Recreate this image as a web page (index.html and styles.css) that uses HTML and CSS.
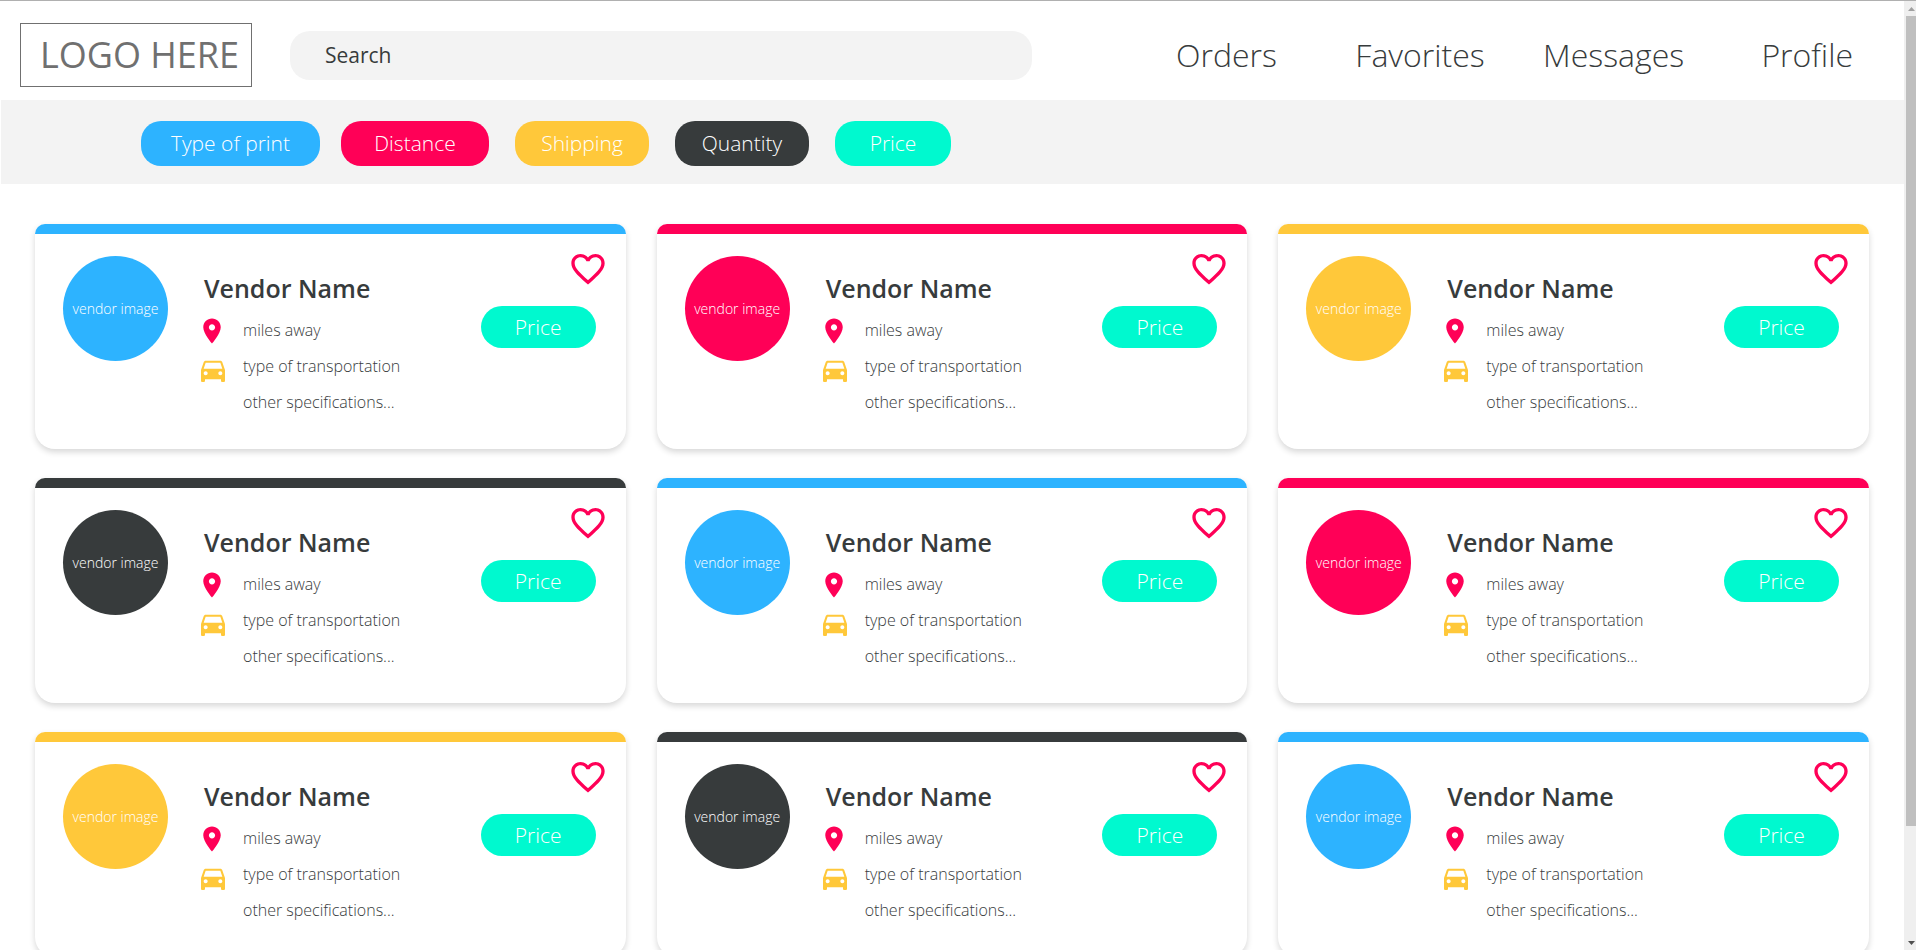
FILE: index.html
```html
<!DOCTYPE html>
<html lang="en">
<head>
<meta charset="utf-8">
<title>Vendors</title>
<link rel="stylesheet" href="styles.css">
</head>
<body>
<svg class="sprite" aria-hidden="true">
  <symbol id="heart" viewBox="0 0 24 24"><path d="M16.5 3c-1.74 0-3.41.81-4.5 2.09C10.91 3.81 9.24 3 7.5 3 4.42 3 2 5.42 2 8.5c0 3.78 3.4 6.86 8.55 11.54L12 21.35l1.45-1.32C18.6 15.36 22 12.28 22 8.5 22 5.42 19.58 3 16.5 3zm-4.4 15.55l-.1.1-.1-.1C7.14 14.24 4 11.39 4 8.5 4 6.5 5.5 5 7.5 5c1.54 0 3.04.99 3.57 2.36h1.87C13.46 5.99 14.96 5 16.5 5c2 0 3.5 1.5 3.5 3.5 0 2.89-3.14 5.74-7.9 10.05z"/></symbol>
  <symbol id="pin" viewBox="0 0 24 24"><path d="M12 2C8.13 2 5 5.13 5 9c0 5.25 7 13 7 13s7-7.75 7-13c0-3.87-3.13-7-7-7zm0 9.5c-1.38 0-2.5-1.12-2.5-2.5s1.12-2.5 2.5-2.5 2.5 1.12 2.5 2.5-1.12 2.5-2.5 2.5z"/></symbol>
  <symbol id="car" viewBox="0 0 24 24"><path d="M18.92 6.01C18.72 5.42 18.16 5 17.5 5h-11c-.66 0-1.21.42-1.42 1.01L3 12v8c0 .55.45 1 1 1h1c.55 0 1-.45 1-1v-1h12v1c0 .55.45 1 1 1h1c.55 0 1-.45 1-1v-8l-2.08-5.99zM6.5 16c-.83 0-1.5-.67-1.5-1.5S5.67 13 6.5 13s1.5.67 1.5 1.5S7.33 16 6.5 16zm11 0c-.83 0-1.5-.67-1.5-1.5s.67-1.5 1.5-1.5 1.5.67 1.5 1.5-.67 1.5-1.5 1.5zM5 11l1.5-4.5h11L19 11H5z"/></symbol>
</svg>
<div class="window">
  <div class="page">
    <header class="header">
      <a class="logo" href="#">LOGO HERE</a>
      <input class="search" type="search" placeholder="Search" aria-label="Search">
      <nav class="nav">
        <a href="#">Orders</a>
        <a href="#">Favorites</a>
        <a href="#">Messages</a>
        <a href="#">Profile</a>
      </nav>
    </header>
    <div class="filters">
      <button class="filter filter-wide blue">Type of print</button>
      <button class="filter filter-roomy pink">Distance</button>
      <button class="filter yellow">Shipping</button>
      <button class="filter dark">Quantity</button>
      <button class="filter filter-small mint">Price</button>
    </div>
    <main class="cards" id="cards"></main>
  </div>
  <div class="scrollbar" aria-hidden="true">
    <svg class="arrow arrow-up" viewBox="0 0 7 4"><path d="M0 4L3.5 0L7 4z"/></svg>
    <div class="track"><div class="thumb"></div></div>
    <svg class="arrow arrow-down" viewBox="0 0 7 4"><path d="M0 0L3.5 4L7 0z"/></svg>
  </div>
</div>
<template id="card">
  <article class="card">
    <div class="band"></div>
    <div class="card-body">
      <div class="avatar">vendor image</div>
      <div class="info">
        <h2 class="name">Vendor Name</h2>
        <ul class="specs">
          <li><span class="icon"><svg class="pin"><use href="#pin"/></svg></span>miles away</li>
          <li><span class="icon"><svg class="car"><use href="#car"/></svg></span>type of transportation</li>
          <li><span class="icon"></span>other specifications...</li>
        </ul>
      </div>
      <div class="actions">
        <button class="favorite" aria-label="Add to favorites"><svg class="heart"><use href="#heart"/></svg></button>
        <button class="price mint">Price</button>
      </div>
    </div>
  </article>
</template>
<script src="script.js"></script>
</body>
</html>
```

FILE: styles.css
```css
* { box-sizing: border-box; }

body {
  margin: 0;
  font-family: "Open Sans", "Noto Sans", sans-serif;
  font-weight: 300;
  color: #373b3c;
  background: #fff;
}

button {
  border: 0;
  padding: 0;
  font: inherit;
  color: #fff;
  cursor: pointer;
}

.sprite { display: none; }

.blue { background: #2db3ff; }
.pink { background: #ff0057; }
.yellow { background: #ffc83a; }
.dark { background: #373b3c; }
.mint { background: #00f9cf; }

.window {
  display: flex;
  height: 100vh;
  overflow: hidden;
  border-top: 1px solid #b0b0b0;
}

.page {
  flex: 1;
  overflow: hidden;
}

/* The search box and the menu share the width left beside the logo. */
.header {
  display: grid;
  grid-template-columns: 232px minmax(0, 8fr) minmax(0, 9fr);
  column-gap: 38px;
  align-items: center;
  height: 99px;
  padding: 9px 0 0 20px;
}

.logo {
  height: 64px;
  padding-left: 19px;
  border: 1px solid #707070;
  font-size: 36px;
  font-weight: 400;
  line-height: 62px;
  white-space: nowrap;
  color: #707070;
  text-decoration: none;
}

.search {
  height: 49px;
  padding: 0 35px;
  border: 0;
  border-radius: 20px;
  background: #f3f3f3;
  font: 500 21px "Open Sans", "Noto Sans", sans-serif;
  color: #373b3c;
}

.search::placeholder { color: #373b3c; opacity: 1; }

.nav {
  display: grid;
  grid-template-columns: repeat(4, 1fr);
  padding-left: 60px;
}

.nav a {
  font-size: 32px;
  line-height: 40px;
  text-align: center;
  color: #373b3c;
  text-decoration: none;
}

.filters {
  display: flex;
  align-items: center;
  gap: 26px;
  height: 84px;
  margin-left: 1px;
  padding: 2px 140px 0;
  background: #f3f3f3;
}

.filter {
  width: 134px;
  height: 45px;
  border-radius: 20px;
  font-size: 21px;
}

.filter-wide { width: 179px; margin-right: -5px; }
.filter-roomy { width: 148px; }
.filter-small { width: 116px; }

.cards {
  display: grid;
  grid-template-columns: repeat(3, 1fr);
  gap: 29px 31px;
  padding: 40px 35px;
}

.card {
  min-height: 225px;
  border-radius: 10px 10px 20px 20px;
  background: #fff;
  box-shadow: 0 3px 6px rgba(0, 0, 0, 0.16);
}

.band {
  height: 10px;
  border-radius: 10px 10px 0 0;
}

.card-body {
  display: flex;
  padding: 15px 18px 0 28px;
}

.avatar {
  flex: none;
  width: 105px;
  height: 105px;
  margin: 7px 28px 0 0;
  border-radius: 50%;
  font-size: 14px;
  line-height: 105px;
  text-align: center;
  color: #fff;
}

.info {
  flex: 1;
  padding-top: 23px;
}

.name {
  margin: 0 0 8px;
  padding-left: 8px;
  font-size: 25px;
  font-weight: 600;
  line-height: 32px;
}

.specs {
  margin: 0;
  padding: 0;
  list-style: none;
  font-size: 16px;
}

.specs li {
  display: flex;
  gap: 13px;
  line-height: 36px;
}

.icon {
  display: flex;
  justify-content: center;
  align-items: flex-end;
  width: 34px;
  height: 38px;
  margin-bottom: -2px;
}

.pin { width: 30px; height: 30px; margin: 0 2px 4px 0; fill: #ff0057; }
.car { width: 32px; height: 32px; fill: #ffc83a; }

.actions {
  display: flex;
  flex-direction: column;
  align-items: flex-end;
  gap: 17px;
}

.favorite { background: none; }
.heart { display: block; width: 40px; height: 40px; fill: #ff0057; }

.price {
  width: 115px;
  height: 42px;
  margin-right: 12px;
  border-radius: 21px;
  font-size: 21px;
}

.scrollbar {
  display: flex;
  flex-direction: column;
  width: 12px;
  padding: 6px 0 5px 2px;
  background: #efefef;
}

.arrow { width: 7px; height: 4px; margin-left: 2px; }
.arrow-up { fill: #a0a0a0; }
.arrow-down { fill: #505050; }

.track { flex: 1; padding: 5px 0; }
.thumb { height: 88%; background: #bfbfbf; }
```

FILE: script.js
```js
const colors = [
  'blue', 'pink', 'yellow',
  'dark', 'blue', 'pink',
  'yellow', 'dark', 'blue'
];
const list = document.getElementById('cards');
const template = document.getElementById('card');

for (const color of colors) {
  const card = template.content.cloneNode(true);
  card.querySelector('.band').classList.add(color);
  card.querySelector('.avatar').classList.add(color);
  list.append(card);
}
```
